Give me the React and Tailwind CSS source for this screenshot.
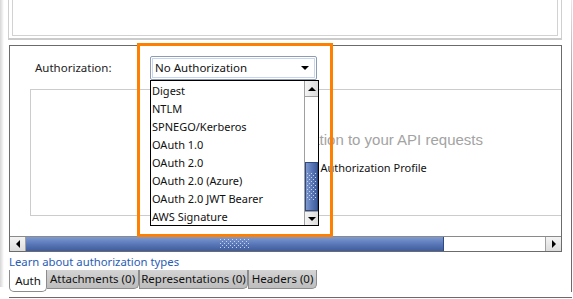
import React from 'react';

const items = ['Digest', 'NTLM', 'SPNEGO/Kerberos', 'OAuth 1.0', 'OAuth 2.0', 'OAuth 2.0 (Azure)', 'OAuth 2.0 JWT Bearer', 'AWS Signature'];

function Arrow({ dir }) {
  const d = {
    up: 'M0 4 L4 0 L8 4 Z',
    down: 'M0 0 L8 0 L4 4 Z',
    left: 'M4 0 L4 8 L0 4 Z',
    right: 'M0 0 L4 4 L0 8 Z',
  }[dir];
  const vert = dir === 'up' || dir === 'down';
  return (
    <svg width={vert ? 8 : 4} height={vert ? 4 : 8} viewBox={vert ? '0 0 8 4' : '0 0 4 8'}>
      <path d={d} fill="#000" />
    </svg>
  );
}

function Grip({ cols, rows }) {
  const dots = [];
  for (let r = 0; r < rows; r++) {
    for (let c = 0; c < cols; c++) {
      if ((r + c) % 2 === 0) dots.push(<rect key={r + '-' + c} x={c * 2} y={r * 2} width="1" height="1" fill="#c8d4ee" />);
    }
  }
  return (
    <svg width={cols * 2} height={rows * 2}>
      {dots}
    </svg>
  );
}

export default function App() {
  return (
    <div className="relative w-[573px] h-[299px] bg-white overflow-hidden text-[#111]" style={{ fontFamily: '"Noto Sans", sans-serif' }}>
      <div className="flex h-[292px]">
        <div className="w-[8px] flex">
          <div className="w-[4px] h-[287px] bg-gradient-to-r from-[#d6d6d6] to-white" />
        </div>

        <div className="w-[554px] flex flex-col">
          {/* top panel */}
          <div className="h-[41px] border-x border-[#cfcfcf] border-b-2 border-b-[#cbcbcb] px-[3px] pb-[2px]">
            <div className="h-full border-x border-b border-[#d2d2d2]" />
          </div>

          {/* main panel */}
          <div className="mt-[5px] ml-[1px] w-[553px] h-[207px] border border-[#6b6b6b] flex flex-col">
            <div className="h-[190px] overflow-hidden">
              <div className="w-[700px] pt-[10px]">
                <div className="flex items-center h-[24px]">
                  <div className="w-[140px] pl-[25px] text-[11.5px] text-[#222]">Authorization:</div>
                  <div className="w-[167px] h-[24px] rounded-[2px] border border-[#8e9bb5] bg-white p-[1px]">
                    <div className="h-full border border-[#c9d5ea] flex items-center justify-between pl-[2px] pr-[5px]">
                      <span className="text-[11.5px] text-[#111]">No Authorization</span>
                      <Arrow dir="down" />
                    </div>
                  </div>
                </div>
                <div className="mt-[9px] ml-[20px] h-[127px] border border-[#cccccc]">
                  <div className="pt-[40px] pl-[196px] text-[15px] leading-[20px] text-[#a3a3a3]" style={{ fontFamily: '"Liberation Sans", sans-serif' }}>
                    Add authorization to your API requests
                  </div>
                  <div className="mt-[10px] pl-[266px] text-[11px] leading-[16px] text-[#111]">
                    Add Authorization Profile
                  </div>
                </div>
              </div>
            </div>

            {/* horizontal scrollbar */}
            <div className="h-[15px] flex border-t border-[#8a8a8a]">
              <div className="w-[16px] flex items-center justify-center bg-gradient-to-b from-[#f4f4f4] to-[#dcdcdc] border-r border-[#a0a0a0]">
                <Arrow dir="left" />
              </div>
              <div className="w-[418px] flex items-center justify-center bg-gradient-to-b from-[#7f9ad0] via-[#5a78b8] to-[#3f5c9c] border-r border-[#2f4a80]">
                <Grip cols={15} rows={5} />
              </div>
              <div className="flex-1 bg-white" />
              <div className="w-[16px] flex items-center justify-center bg-gradient-to-b from-[#f4f4f4] to-[#dcdcdc] border-l border-[#a0a0a0]">
                <Arrow dir="right" />
              </div>
            </div>
          </div>

          <div className="mt-[3px] ml-[1px] text-[11.3px] leading-[14px] text-[#2a5cb4]">Learn about authorization types</div>

          {/* tabs */}
          <div className="ml-[1px] mt-[1px] flex items-start text-[11.5px]">
            <div className="w-[38px] h-[22px] flex items-center justify-center border border-[#8c8c8c] border-t-0 rounded-b-[5px] bg-white text-[#111]">Auth</div>
            <div className="w-[92px] h-[19px] flex items-center justify-center border border-[#8c8c8c] border-t-0 border-l-0 rounded-br-[5px] bg-gradient-to-b from-[#d4d4d4] to-[#bdbdbd]">Attachments (0)</div>
            <div className="w-[109px] h-[19px] flex items-center justify-center border border-[#8c8c8c] border-t-0 rounded-br-[5px] bg-gradient-to-b from-[#d4d4d4] to-[#bdbdbd]">Representations (0)</div>
            <div className="w-[69px] h-[19px] flex items-center justify-center border border-[#8c8c8c] border-t-0 rounded-br-[5px] bg-gradient-to-b from-[#d4d4d4] to-[#bdbdbd]">Headers (0)</div>
          </div>
        </div>

        <div className="w-[9px]" />
        <div className="w-[1px] bg-gradient-to-b from-[#e8e8e8] via-[#6b6b6b] to-[#6b6b6b]" />
      </div>
      <div className="mt-[5px] ml-[9px] w-[563px] h-[1px] bg-[#6b6b6b]" />

      {/* dropdown list (overlay) */}
      <div className="absolute left-[150px] top-[80px] w-[169px] h-[146px] border border-black bg-white flex">
        <div className="flex-1 pt-[1px]">
          {items.map((it) => (
            <div key={it} className="h-[18px] pl-[1px] flex items-center text-[11px] text-[#111]">{it}</div>
          ))}
        </div>
        <div className="w-[14px] flex flex-col border-l border-[#a0a0a0]">
          <div className="h-[16px] flex items-center justify-center bg-gradient-to-r from-[#f4f4f4] to-[#dcdcdc] border-b border-[#a0a0a0]">
            <Arrow dir="up" />
          </div>
          <div className="flex-1 bg-white" />
          <div className="h-[49px] flex items-center justify-center bg-gradient-to-r from-[#7f9ad0] via-[#5a78b8] to-[#3f5c9c] border border-[#2f4a80]">
            <Grip cols={5} rows={14} />
          </div>
          <div className="h-[14px] flex items-center justify-center bg-gradient-to-r from-[#f4f4f4] to-[#dcdcdc] border-t border-[#a0a0a0]">
            <Arrow dir="down" />
          </div>
        </div>
      </div>

      {/* highlight frame */}
      <div className="absolute left-[137px] top-[43px] w-[196px] h-[194px] border-[3px] border-[#ff8000] pointer-events-none" />
    </div>
  );
}
